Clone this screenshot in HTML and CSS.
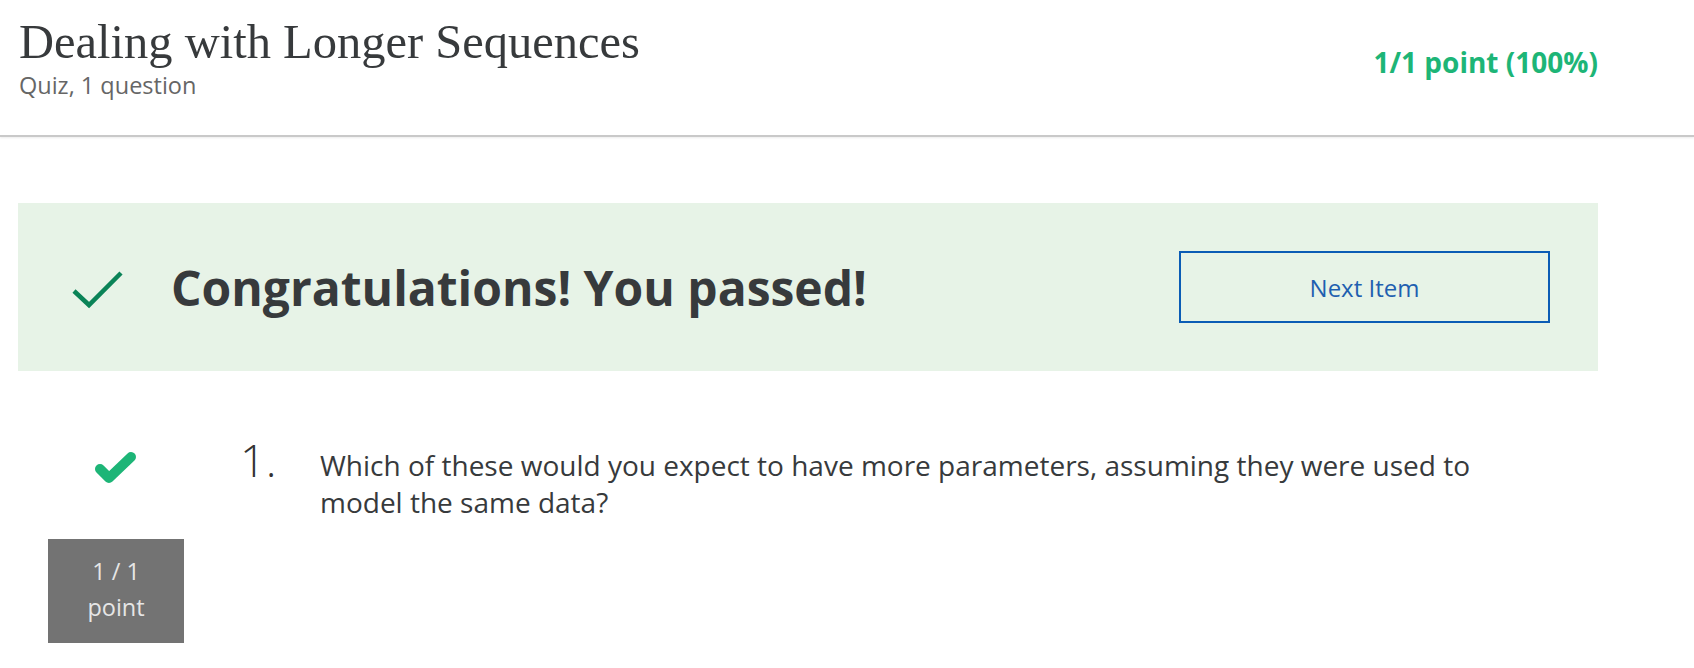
FILE: index.html
```html
<!DOCTYPE html>
<html lang="en">
<head>
<meta charset="utf-8">
<title>Dealing with Longer Sequences</title>
<link rel="stylesheet" href="styles.css">
</head>
<body>
<header class="header">
  <div class="header-text">
    <h1 class="title">Dealing with Longer Sequences</h1>
    <div class="subtitle">Quiz, 1 question</div>
  </div>
  <div class="score">1/1 point (100%)</div>
</header>
<main class="main">
  <section class="banner">
    <svg class="banner-check" width="52" height="40" viewBox="0 0 52 40" aria-hidden="true">
      <polyline points="2,22 17,36 49,4" fill="none" stroke="#0a8357" stroke-width="4.5"/>
    </svg>
    <h2 class="banner-title">Congratulations! You passed!</h2>
    <button class="next-btn" type="button">Next Item</button>
  </section>
  <section class="question">
    <div class="q-side">
      <svg class="q-check" width="46" height="36" viewBox="0 0 46 36" aria-hidden="true">
        <polyline points="7,19 16,28 38,7" fill="none" stroke="#1db577" stroke-width="10" stroke-linecap="round" stroke-linejoin="round"/>
      </svg>
      <div class="q-points">1 / 1<br>point</div>
    </div>
    <div class="q-num">1.</div>
    <div class="q-text">Which of these would you expect to have more parameters, assuming they were used to model the same data?</div>
  </section>
</main>
</body>
</html>
```

FILE: styles.css
```css
html, body {
  margin: 0;
  padding: 0;
  background: #ffffff;
}

body {
  font-family: "Open Sans", "Liberation Sans", sans-serif;
  color: #373a3c;
}

.header {
  display: flex;
  justify-content: space-between;
  align-items: center;
  height: 135px;
  padding: 0 96px 0 19px;
  border-bottom: 2px solid #c9c9c9;
  box-shadow: 0 1px 2px rgba(0, 0, 0, 0.08);
  box-sizing: content-box;
}

.header-text {
  align-self: flex-start;
  padding-top: 14px;
}

.title {
  margin: 0;
  font-family: "Liberation Serif", "DejaVu Serif", serif;
  font-weight: 400;
  font-size: 48.5px;
  line-height: 56px;
  color: #373a3c;
}

.subtitle {
  font-size: 23.5px;
  line-height: 30px;
  color: #666666;
  margin-top: 0;
}

.score {
  font-weight: 700;
  font-size: 28px;
  color: #1db577;
  margin-top: -12px;
}

.main {
  padding: 66px 96px 0 18px;
}

.banner {
  display: flex;
  align-items: center;
  height: 168px;
  background: #e7f3e7;
  padding: 0 48px 0 54px;
}

.banner-check {
  flex: none;
  margin-top: 4px;
}

.banner-title {
  margin: 0 0 0 47px;
  font-size: 48px;
  font-weight: 700;
  color: #373a3c;
}

.next-btn {
  margin-left: auto;
  width: 371px;
  height: 72px;
  background: transparent;
  border: 2px solid #0b5cb5;
  color: #1f5fb0;
  font-family: "Open Sans", "Liberation Sans", sans-serif;
  font-size: 24px;
  cursor: pointer;
}

.question {
  display: flex;
  align-items: flex-start;
  padding-top: 79px;
}

.q-side {
  display: flex;
  flex-direction: column;
  align-items: center;
  width: 136px;
  margin-left: 30px;
}

.q-check {
  display: block;
}

.q-points {
  margin-top: 53px;
  width: 136px;
  height: 104px;
  background: #737373;
  color: #e6e6e6;
  font-size: 23.5px;
  line-height: 36px;
  text-align: center;
  padding-top: 14px;
  box-sizing: border-box;
}

.q-num {
  margin-left: 56px;
  font-size: 45px;
  font-weight: 300;
  line-height: 48px;
  margin-top: -14px;
  color: #333333;
  width: 80px;
}

.q-text {
  width: 1200px;
  font-size: 28px;
  line-height: 37px;
  color: #373a3c;
  margin-top: -3px;
}
```
